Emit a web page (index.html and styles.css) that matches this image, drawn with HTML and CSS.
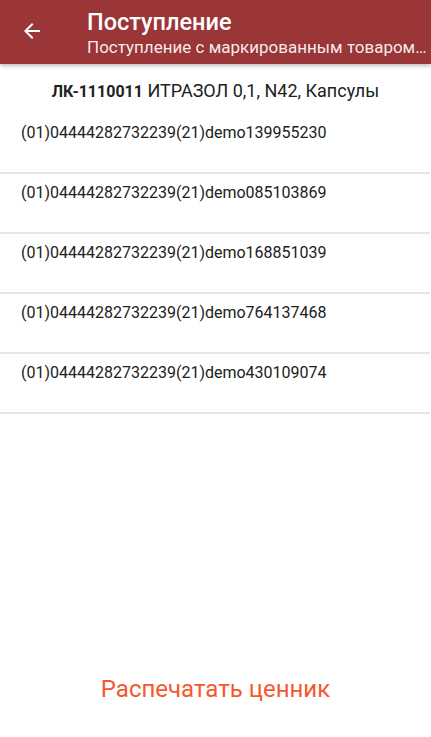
FILE: index.html
```html
<!DOCTYPE html>
<html lang="ru">
<head>
<meta charset="utf-8">
<link rel="stylesheet" href="styles.css">
</head>
<body>
<div class="screen">
  <header class="appbar">
    <button class="back" aria-label="Назад">
      <svg width="24" height="24" viewBox="0 0 24 24"><path fill="#fff" d="M20 11H7.83l5.59-5.59L12 4l-8 8 8 8 1.41-1.41L7.83 13H20v-2z"/></svg>
    </button>
    <div class="titles">
      <div class="title">Поступление</div>
      <div class="subtitle">Поступление с маркированным товаром…</div>
    </div>
  </header>
  <main class="content">
    <div class="product"><b class="code">ЛК-1110011</b> ИТРАЗОЛ 0,1, N42, Капсулы</div>
    <ul class="list">
      <li class="row">(01)04444282732239(21)demo139955230</li>
      <li class="row">(01)04444282732239(21)demo085103869</li>
      <li class="row">(01)04444282732239(21)demo168851039</li>
      <li class="row">(01)04444282732239(21)demo764137468</li>
      <li class="row">(01)04444282732239(21)demo430109074</li>
    </ul>
  </main>
  <footer class="footer">
    <button class="print">Распечатать ценник</button>
  </footer>
</div>
</body>
</html>
```
FILE: styles.css
```css
* { box-sizing: border-box; }
html, body { margin: 0; padding: 0; background: #fff; }
body { font-family: Roboto, "Noto Sans", sans-serif; color: #212121; }
.screen { width: 431px; height: 737px; display: flex; flex-direction: column; overflow: hidden; }
.appbar {
  height: 64px; background: #9a3538; display: flex; align-items: center;
  box-shadow: 0 2px 4px rgba(0,0,0,0.25); position: relative; z-index: 1; flex-shrink: 0;
}
.back {
  width: 24px; height: 24px; margin-left: 20px; margin-right: 43px; padding: 0;
  border: 0; background: none; display: flex; margin-top: -3px; flex-shrink: 0;
}
.titles { display: flex; flex-direction: column; flex: 1; min-width: 0; color: #fff; }
.title { font-size: 23.5px; font-weight: 500; line-height: 28px; margin-top: 0; }
.subtitle { font-size: 17px; line-height: 20px; color: rgba(255,255,255,0.92); margin-top: 1px; white-space: nowrap; }
.content { flex: 1; }
.product { text-align: center; font-size: 18px; line-height: 22px; padding-top: 16px; height: 50px; color: #212121; }
.code { font-size: 16px; font-weight: 700; }
.list { list-style: none; margin: 0; padding: 0; }
.row {
  height: 60px; padding: 9px 0 0 21px; font-size: 16px; line-height: 20px;
  border-bottom: 2px solid #e6e6e6; margin-right: 1px; color: #212121;
}
.footer { height: 100px; display: flex; justify-content: center; padding-top: 37px; flex-shrink: 0; }
.print {
  border: 0; background: none; font-family: Roboto, sans-serif; font-size: 24px;
  color: #f4592e; height: 30px; padding: 0; line-height: 30px;
}
```
